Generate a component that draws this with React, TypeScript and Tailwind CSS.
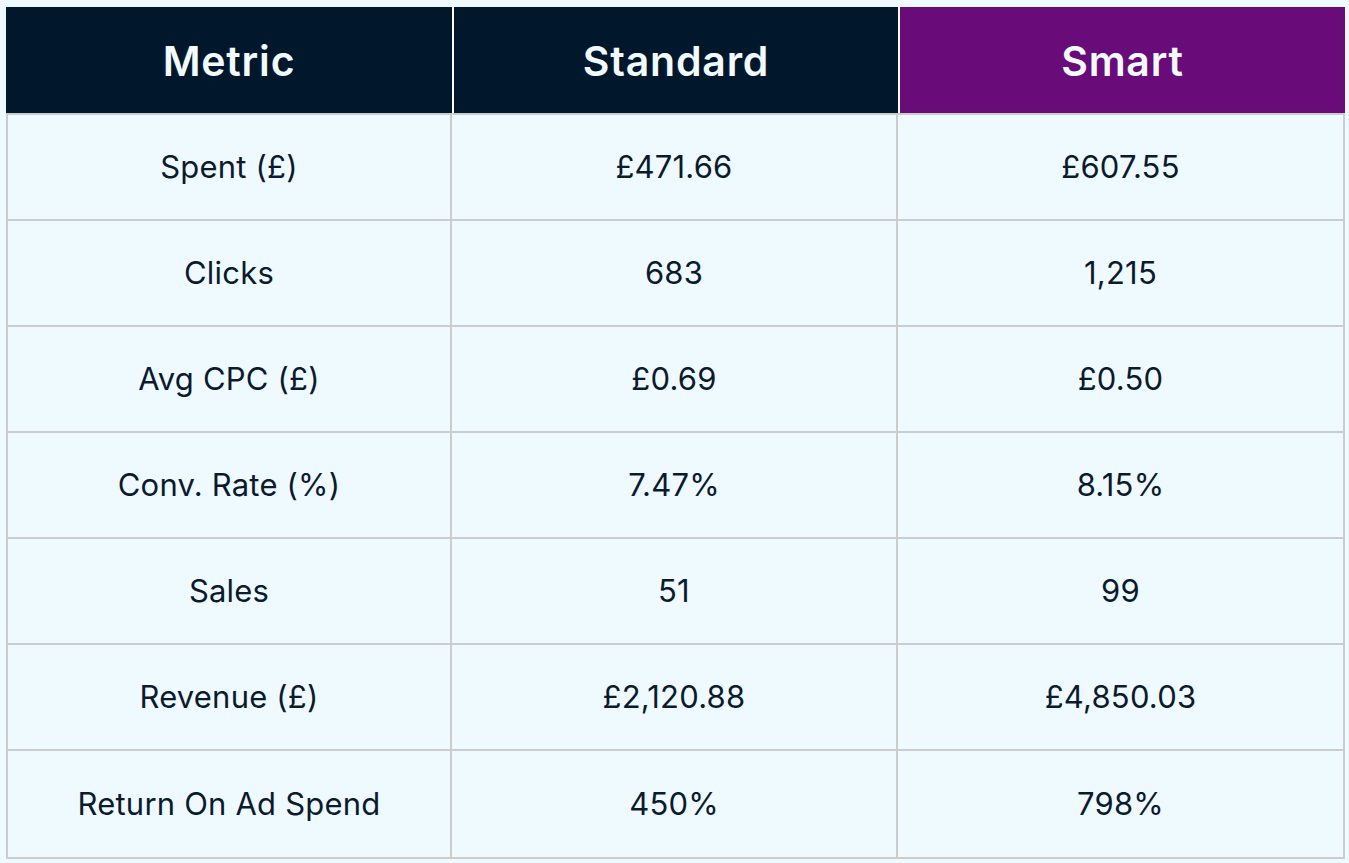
const ROWS = [
  ["Spent (£)", "£471.66", "£607.55"],
  ["Clicks", "683", "1,215"],
  ["Avg CPC (£)", "£0.69", "£0.50"],
  ["Conv. Rate (%)", "7.47%", "8.15%"],
  ["Sales", "51", "99"],
  ["Revenue (£)", "£2,120.88", "£4,850.03"],
  ["Return On Ad Spend", "450%", "798%"],
];

export default function App() {
  return (
    <div className="min-h-screen bg-[#eefaff] pl-[6px] pt-[7px] font-['Inter','Liberation_Sans',sans-serif] text-[#0b1a2c]">
      <div className="w-[1339px]">
        {/* Header */}
        <div className="grid grid-cols-[446px_444px_445px] gap-[2px] bg-white h-[106px]">
          <div className="bg-[#01172b] flex items-center justify-center pt-[4px] text-[41px] font-semibold tracking-[0.8px] text-[#f2fbff]">Metric</div>
          <div className="bg-[#01172b] flex items-center justify-center pt-[4px] text-[41px] font-semibold tracking-[0.8px] text-[#f2fbff]">Standard</div>
          <div className="bg-[#690b78] flex items-center justify-center pt-[4px] text-[41px] font-semibold tracking-[0.8px] text-[#f2fbff]">Smart</div>
        </div>

        {/* Body */}
        <div className="border-2 border-[#cccccc] divide-y-2 divide-[#cccccc]">
          {ROWS.map((row) => (
            <div key={row[0]} className="grid grid-cols-[444px_446px_445px] divide-x-2 divide-[#cccccc] h-[106px]">
              {row.map((cell, i) => (
                <div key={i} className="flex items-center justify-center text-[31px] tracking-[0.2px]">
                  {cell}
                </div>
              ))}
            </div>
          ))}
        </div>
      </div>
    </div>
  );
}
